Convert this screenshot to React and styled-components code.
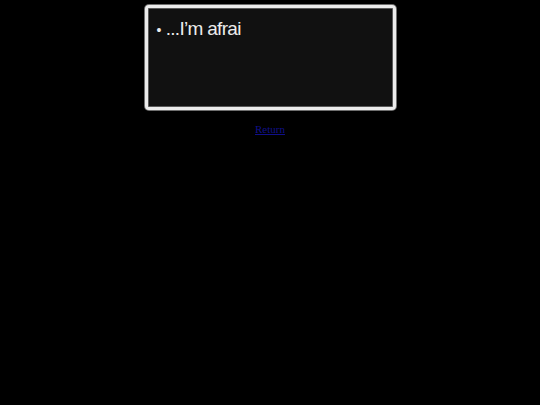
import React from "react";
import styled, { createGlobalStyle } from "styled-components";

const Global = createGlobalStyle`
  html, body {
    margin: 0;
    background: #000;
  }
`;

const Page = styled.div`
  display: flex;
  flex-direction: column;
  align-items: center;
  padding-top: 5px;
`;

const DialogBox = styled.div`
  box-sizing: border-box;
  width: 251px;
  height: 105px;
  background: #111;
  border: 3px solid #ececec;
  border-radius: 4px;
  box-shadow: 0 0 0 1px #6f6f6f, inset 0 0 0 1px #5a5a5a;
  padding: 10px 9px;
`;

const Line = styled.div`
  display: flex;
  align-items: baseline;
  gap: 5px;
  color: #ececec;
  font-family: "Liberation Sans", Arial, sans-serif;
  font-size: 19px;
  line-height: 22px;
  letter-spacing: -0.7px;
`;

const Bullet = styled.span`
  font-size: 14px;
`;

const ReturnLink = styled.a`
  margin-top: 13px;
  font-family: "Liberation Serif", serif;
  font-size: 11px;
  color: #10108a;
  text-decoration: underline;
`;

export default function App() {
  return (
    <>
      <Global />
      <Page>
        <DialogBox>
          <Line>
            <Bullet>•</Bullet>
            <span>...I’m afrai</span>
          </Line>
        </DialogBox>
        <ReturnLink href="#">Return</ReturnLink>
      </Page>
    </>
  );
}
